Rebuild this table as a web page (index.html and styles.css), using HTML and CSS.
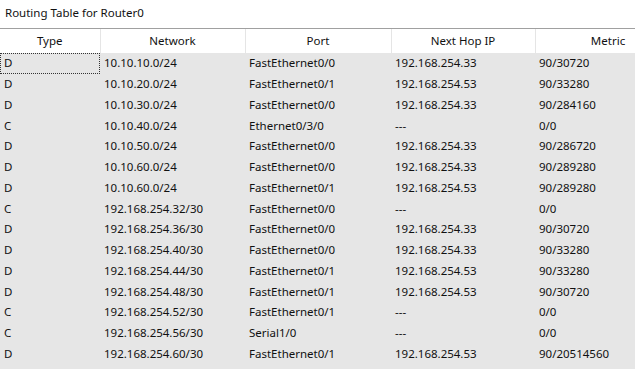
FILE: index.html
```html
<!DOCTYPE html>
<html>
<head>
<meta charset="utf-8">
<link rel="stylesheet" href="styles.css">
</head>
<body>
<div class="window">
  <div class="title">Routing Table for Router0</div>
  <div class="table-wrap">
    <table class="routes">
      <colgroup>
        <col class="c-type"><col class="c-net"><col class="c-port"><col class="c-hop"><col class="c-metric">
      </colgroup>
      <thead>
        <tr><th>Type</th><th>Network</th><th>Port</th><th>Next Hop IP</th><th>Metric</th></tr>
      </thead>
      <tbody>
        <tr><td class="focus">D</td><td>10.10.10.0/24</td><td>FastEthernet0/0</td><td>192.168.254.33</td><td>90/30720</td></tr>
        <tr><td>D</td><td>10.10.20.0/24</td><td>FastEthernet0/1</td><td>192.168.254.53</td><td>90/33280</td></tr>
        <tr><td>D</td><td>10.10.30.0/24</td><td>FastEthernet0/0</td><td>192.168.254.33</td><td>90/284160</td></tr>
        <tr><td>C</td><td>10.10.40.0/24</td><td>Ethernet0/3/0</td><td>---</td><td>0/0</td></tr>
        <tr><td>D</td><td>10.10.50.0/24</td><td>FastEthernet0/0</td><td>192.168.254.33</td><td>90/286720</td></tr>
        <tr><td>D</td><td>10.10.60.0/24</td><td>FastEthernet0/0</td><td>192.168.254.33</td><td>90/289280</td></tr>
        <tr><td>D</td><td>10.10.60.0/24</td><td>FastEthernet0/1</td><td>192.168.254.53</td><td>90/289280</td></tr>
        <tr><td>C</td><td>192.168.254.32/30</td><td>FastEthernet0/0</td><td>---</td><td>0/0</td></tr>
        <tr><td>D</td><td>192.168.254.36/30</td><td>FastEthernet0/0</td><td>192.168.254.33</td><td>90/30720</td></tr>
        <tr><td>D</td><td>192.168.254.40/30</td><td>FastEthernet0/0</td><td>192.168.254.33</td><td>90/33280</td></tr>
        <tr><td>D</td><td>192.168.254.44/30</td><td>FastEthernet0/1</td><td>192.168.254.53</td><td>90/33280</td></tr>
        <tr><td>D</td><td>192.168.254.48/30</td><td>FastEthernet0/1</td><td>192.168.254.53</td><td>90/30720</td></tr>
        <tr><td>C</td><td>192.168.254.52/30</td><td>FastEthernet0/1</td><td>---</td><td>0/0</td></tr>
        <tr><td>C</td><td>192.168.254.56/30</td><td>Serial1/0</td><td>---</td><td>0/0</td></tr>
        <tr><td>D</td><td>192.168.254.60/30</td><td>FastEthernet0/1</td><td>192.168.254.53</td><td>90/20514560</td></tr>
      </tbody>
    </table>
  </div>
</div>
</body>
</html>
```
FILE: styles.css
```css
html, body {
  margin: 0;
  padding: 0;
  background: #e6e6e6;
}
.window {
  width: 635px;
  height: 369px;
  overflow: hidden;
  font-family: "Noto Sans", "Open Sans", sans-serif;
  font-size: 11.5px;
  color: #111111;
  background: #e6e6e6;
}
.title {
  height: 29px;
  box-sizing: border-box;
  padding: 4px 0 0 5px;
  line-height: 17px;
  background: #ffffff;
  border-bottom: 1px solid #a0a0a0;
}
.table-wrap {
  width: 635px;
  overflow: hidden;
}
.routes {
  border-collapse: collapse;
  table-layout: fixed;
  width: 681px;
}
.c-type { width: 100px; }
.c-net { width: 145px; }
.c-port { width: 146px; }
.c-hop { width: 144px; }
.c-metric { width: 146px; }
.routes th {
  height: 24px;
  padding: 0;
  font-weight: normal;
  text-align: center;
  background: #ffffff;
  border-right: 1px solid #e5e5e5;
  line-height: 24px;
}
.routes td {
  height: 20.75px;
  padding: 0 0 0 4px;
  line-height: 20px;
  white-space: nowrap;
  text-align: left;
}
.routes td.focus {
  outline: 1px dotted #333;
  outline-offset: -1px;
}
```
